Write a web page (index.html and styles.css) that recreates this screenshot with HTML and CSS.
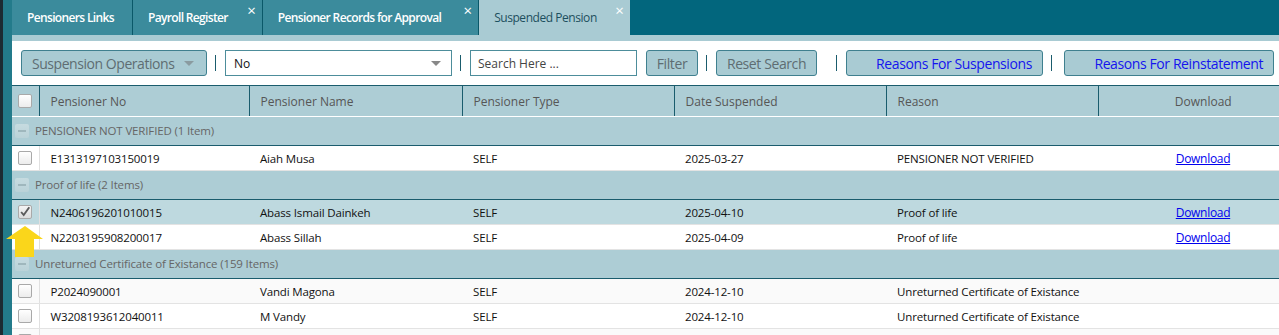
FILE: index.html
```html
<!DOCTYPE html>
<html lang="en">
<head>
    <meta charset="UTF-8">
    <meta name="viewport" content="width=device-width, initial-scale=1.0">
    <title>Suspended Pension</title>
    <link rel="stylesheet" href="styles.css">
</head>
<body>
    <div class="app">
        <div class="tabs">
            <div class="tab tab-first">Pensioners Links</div>
            <div class="tab closable">Payroll Register<span class="close">&times;</span></div>
            <div class="tab closable tab-wide">Pensioner Records for Approval<span class="close">&times;</span></div>
            <div class="tab closable active">Suspended Pension<span class="close">&times;</span></div>
        </div>
        <div class="tab-strip"></div>

        <div class="toolbar">
            <button class="btn btn-ops">Suspension Operations <span class="caret"></span></button>
            <span class="sep"></span>
            <div class="select">No <span class="caret"></span></div>
            <span class="sep"></span>
            <input class="search" type="text" placeholder="Search Here ...">
            <button class="btn btn-filter">Filter</button>
            <span class="sep"></span>
            <button class="btn btn-reset">Reset Search</button>
            <span class="sep sep-wide"></span>
            <button class="btn btn-link btn-susp">Reasons For Suspensions</button>
            <span class="sep"></span>
            <button class="btn btn-link btn-rein">Reasons For Reinstatement</button>
        </div>

        <table class="grid">
            <colgroup>
                <col class="c-check">
                <col class="c-no">
                <col class="c-name">
                <col class="c-type">
                <col class="c-date">
                <col class="c-reason">
                <col>
            </colgroup>
            <thead>
                <tr>
                    <th class="cell-check"><span class="box"></span></th>
                    <th>Pensioner No</th>
                    <th>Pensioner Name</th>
                    <th>Pensioner Type</th>
                    <th>Date Suspended</th>
                    <th>Reason</th>
                    <th class="cell-dl">Download</th>
                </tr>
            </thead>
            <tbody>
                <tr class="group">
                    <td colspan="7"><span class="collapse"></span>PENSIONER NOT VERIFIED (1 Item)</td>
                </tr>
                <tr>
                    <td class="cell-check"><span class="box"></span></td>
                    <td>E1313197103150019</td>
                    <td>Aiah Musa</td>
                    <td>SELF</td>
                    <td>2025-03-27</td>
                    <td>PENSIONER NOT VERIFIED</td>
                    <td class="cell-dl"><a href="#">Download</a></td>
                </tr>
                <tr class="group">
                    <td colspan="7"><span class="collapse"></span>Proof of life (2 Items)</td>
                </tr>
                <tr class="selected">
                    <td class="cell-check">
                        <span class="box checked">
                            <svg width="14" height="14" viewBox="0 0 14 14"><path d="M2.5 7 L5.5 10.5 L12 1.5" fill="none" stroke="#5b5b5b" stroke-width="2.2"/></svg>
                        </span>
                    </td>
                    <td>N2406196201010015</td>
                    <td>Abass Ismail Dainkeh</td>
                    <td>SELF</td>
                    <td>2025-04-10</td>
                    <td>Proof of life</td>
                    <td class="cell-dl"><a href="#">Download</a></td>
                </tr>
                <tr>
                    <td class="cell-check"></td>
                    <td>N2203195908200017</td>
                    <td>Abass Sillah</td>
                    <td>SELF</td>
                    <td>2025-04-09</td>
                    <td>Proof of life</td>
                    <td class="cell-dl"><a href="#">Download</a></td>
                </tr>
                <tr class="group">
                    <td colspan="7"><span class="collapse"></span>Unreturned Certificate of Existance (159 Items)</td>
                </tr>
                <tr class="alt">
                    <td class="cell-check"><span class="box"></span></td>
                    <td>P2024090001</td>
                    <td>Vandi Magona</td>
                    <td>SELF</td>
                    <td>2024-12-10</td>
                    <td>Unreturned Certificate of Existance</td>
                    <td class="cell-dl"></td>
                </tr>
                <tr>
                    <td class="cell-check"><span class="box"></span></td>
                    <td>W3208193612040011</td>
                    <td>M Vandy</td>
                    <td>SELF</td>
                    <td>2024-12-10</td>
                    <td>Unreturned Certificate of Existance</td>
                    <td class="cell-dl"></td>
                </tr>
                <tr class="alt">
                    <td class="cell-check"><span class="box"></span></td>
                    <td></td>
                    <td></td>
                    <td></td>
                    <td></td>
                    <td></td>
                    <td class="cell-dl"></td>
                </tr>
            </tbody>
        </table>

        <!-- highlight arrow pointing at the selected row -->
        <svg class="pointer" width="40" height="32" viewBox="0 0 40 32">
            <path d="M20 0 L38 13 L29 13 L29 31 L10 31 L10 13 L1 13 Z" fill="#fad61b"/>
        </svg>
    </div>
</body>
</html>
```

FILE: styles.css
```css
:root {
    --bar: #02667d;
    --tab: #3b8b9c;
    --tab-line: #0a5869;
    --light: #a9cbd3;
    --head: #adcdd5;
    --sel: #bed9df;
    --dark-line: #1a5c6d;
    --btn-border: #3f808f;
}
html, body {
    margin: 0;
    padding: 0;
}
body {
    font-family: "Open Sans", "DejaVu Sans", sans-serif;
    font-size: 12px;
    color: #111;
    background: linear-gradient(to right, #1c2b33 0, #1c2b33 3px, #237b8b 3px);
    height: 100vh;
    overflow: hidden;
}
.app {
    position: relative;
    margin-left: 12px;
    background: #fff;
    height: 100vh;
}

/* tabs */
.tabs {
    display: flex;
    height: 35px;
    background: var(--bar);
}
.tab {
    position: relative;
    display: flex;
    align-items: center;
    padding: 0 18px 0 15px;
    background: var(--tab);
    color: #fff;
    font-weight: 600;
    font-size: 12px;
    letter-spacing: -0.65px;
    white-space: nowrap;
    border-right: 1px solid var(--tab-line);
}
.tab.closable {
    padding-right: 34px;
}
.tab.closable.tab-wide {
    padding-right: 37px;
}
.tab.active {
    background: var(--light);
    color: #1d4f5e;
    font-weight: 400;
    letter-spacing: -0.45px;
    border-right: none;
    padding-right: 33px;
}
.close {
    position: absolute;
    top: 2px;
    right: 6px;
    font-size: 15px;
    font-weight: 400;
    letter-spacing: 0;
    color: #fff;
    line-height: 16px;
}
.tab-strip {
    height: 6px;
    background: var(--light);
}

/* toolbar */
.toolbar {
    display: flex;
    align-items: center;
    height: 44px;
    padding: 0 0 0 9px;
    box-sizing: border-box;
}
.btn {
    height: 26px;
    box-sizing: border-box;
    background: var(--light);
    border: 1px solid var(--btn-border);
    border-radius: 3px;
    font-family: inherit;
    font-size: 14px;
    color: #5e6d72;
    padding: 0 10px;
    letter-spacing: -0.4px;
    white-space: nowrap;
}
.btn-ops {
    width: 186px;
    text-align: left;
    display: flex;
    align-items: center;
    gap: 10px;
    letter-spacing: -0.45px;
}
.btn-ops .caret {
    border-top-color: #8a9ba0;
}
.caret {
    display: inline-block;
    width: 0;
    height: 0;
    border-left: 5px solid transparent;
    border-right: 5px solid transparent;
    border-top: 5px solid #888;
}
.sep {
    width: 1px;
    height: 16px;
    background: var(--dark-line);
    margin: 0 9px 0 8px;
}
.sep-wide {
    margin-left: 19px;
}
.select {
    width: 227px;
    height: 26px;
    box-sizing: border-box;
    border: 1px solid #4d8d9b;
    display: flex;
    align-items: center;
    justify-content: space-between;
    padding: 0 10px 0 8px;
    font-size: 12px;
}
.search {
    width: 167px;
    height: 26px;
    box-sizing: border-box;
    border: 1px solid #4d8d9b;
    font-family: inherit;
    font-size: 12px;
    padding: 0 7px;
    outline: none;
    margin-right: 9px;
}
.search::placeholder {
    color: #444;
}
.btn-filter {
    width: 52px;
    padding: 0;
}
.btn-reset {
    width: 101px;
    padding: 0;
}
.btn-link {
    color: #1414ee;
    text-align: right;
}
.btn-susp {
    width: 197px;
}
.btn-rein {
    width: 210px;
    margin-left: 3px;
}

/* grid */
.grid {
    width: 100%;
    border-collapse: collapse;
    table-layout: fixed;
}
.c-check { width: 27px; }
.c-no { width: 210px; }
.c-name { width: 213px; }
.c-type { width: 212px; }
.c-date { width: 212px; }
.c-reason { width: 212px; }

.grid th {
    height: 30px;
    background: var(--head);
    border-top: 1px solid var(--dark-line);
    border-bottom: 1px solid #fff;
    border-left: 1px solid var(--dark-line);
    color: #565656;
    font-weight: 400;
    text-align: left;
    padding: 0 11px;
    white-space: nowrap;
}
.grid th:first-child {
    border-left: none;
}
.grid td {
    height: 24px;
    padding: 0 11px;
    border-bottom: 1px solid #e3e3e3;
    white-space: nowrap;
    overflow: hidden;
    font-size: 11.5px;
    letter-spacing: -0.15px;
}
.grid .cell-check {
    padding: 0 0 0 6px;
    border-right: 1px solid #e0e0e0;
}
.grid th.cell-check {
    border-right: none;
}
.grid .cell-dl {
    text-align: center;
    padding-left: 40px;
}
.grid td.cell-dl {
    font-size: 12px;
    letter-spacing: -0.3px;
}
.grid a {
    color: #0000ee;
    text-decoration: underline;
}
.group td {
    height: 28px;
    background: var(--head);
    border-bottom: 1px solid var(--dark-line);
    color: #666;
    padding: 0 0 0 3px;
}
.selected td {
    background: var(--sel);
}
.alt td {
    background: #fafafa;
}
.box {
    display: flex;
    align-items: center;
    justify-content: center;
    width: 14px;
    height: 14px;
    box-sizing: border-box;
    border: 1px solid #a9a9a9;
    border-radius: 2px;
    background: linear-gradient(#fff, #ececec);
}
.box.checked {
    background: linear-gradient(#f4f4f4, #dcdcdc);
}
.collapse {
    display: inline-block;
    vertical-align: middle;
    width: 14px;
    height: 14px;
    margin-right: 6px;
    border-radius: 2px;
    background: linear-gradient(#c6dbe0, #bad2d8) no-repeat;
    position: relative;
    top: -1px;
}
.collapse::after {
    content: "";
    position: absolute;
    left: 3px;
    right: 3px;
    top: 6px;
    height: 2px;
    background: #9fb7bd;
}

.pointer {
    position: absolute;
    left: -7px;
    top: 226px;
}
```
